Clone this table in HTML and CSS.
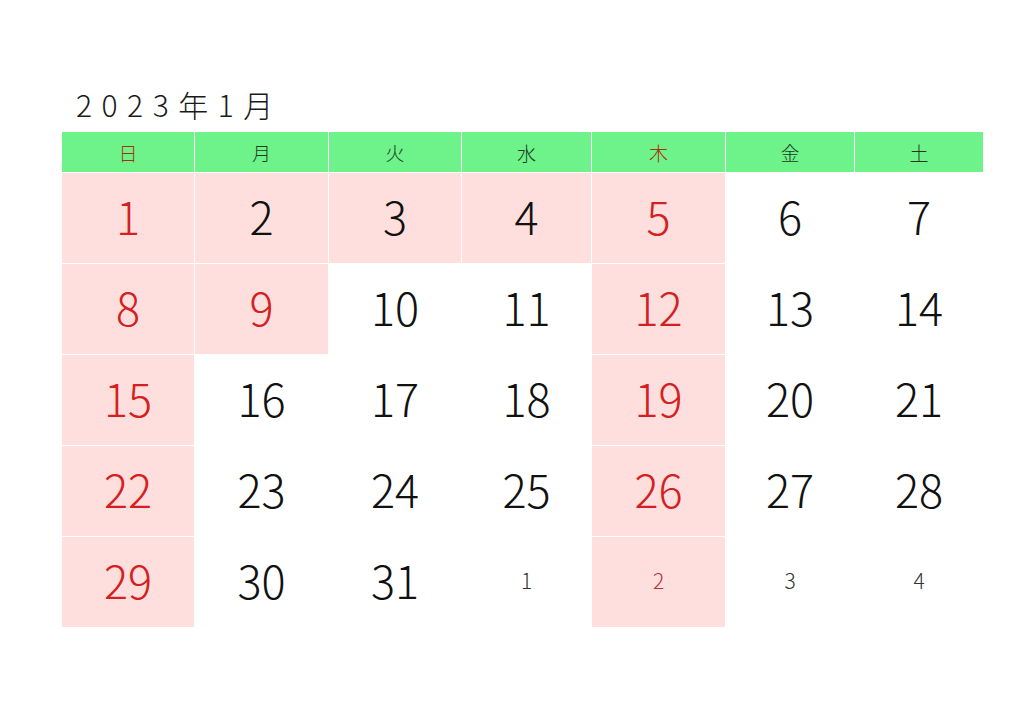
FILE: index.html
```html
<!DOCTYPE html>
<html lang="ja">
<head>
<meta charset="utf-8">
<title>2023年1月</title>
<link rel="stylesheet" href="styles.css">
</head>
<body>
<div class="page">
  <div class="title">2023年1月</div>
  <div class="cal">
    <div class="hd red">日</div>
    <div class="hd">月</div>
    <div class="hd">火</div>
    <div class="hd">水</div>
    <div class="hd red">木</div>
    <div class="hd">金</div>
    <div class="hd">土</div>

    <div class="d pink red">1</div>
    <div class="d pink">2</div>
    <div class="d pink">3</div>
    <div class="d pink">4</div>
    <div class="d pink red">5</div>
    <div class="d">6</div>
    <div class="d">7</div>

    <div class="d pink red">8</div>
    <div class="d pink red">9</div>
    <div class="d">10</div>
    <div class="d">11</div>
    <div class="d pink red">12</div>
    <div class="d">13</div>
    <div class="d">14</div>

    <div class="d pink red">15</div>
    <div class="d">16</div>
    <div class="d">17</div>
    <div class="d">18</div>
    <div class="d pink red">19</div>
    <div class="d">20</div>
    <div class="d">21</div>

    <div class="d pink red">22</div>
    <div class="d">23</div>
    <div class="d">24</div>
    <div class="d">25</div>
    <div class="d pink red">26</div>
    <div class="d">27</div>
    <div class="d">28</div>

    <div class="d pink red">29</div>
    <div class="d">30</div>
    <div class="d">31</div>
    <div class="d next">1</div>
    <div class="d next pink red">2</div>
    <div class="d next">3</div>
    <div class="d next">4</div>
  </div>
</div>
</body>
</html>
```

FILE: styles.css
```css
html, body {
  margin: 0;
  padding: 0;
  background: #ffffff;
}

body {
  font-family: "Noto Sans CJK JP", "Noto Sans", sans-serif;
  color: #1a1a1a;
}

.page {
  width: 1024px;
  height: 724px;
  padding: 84px 0 0 62px;
  box-sizing: border-box;
}

.title {
  height: 40px;
  line-height: 40px;
  padding-left: 14px;
  margin-bottom: 8px;
  font-size: 30px;
  letter-spacing: 9.5px;
  font-weight: 300;
}

.cal {
  display: grid;
  grid-template-columns: 132px 133px 132px 129px 133px 128px 128px;
  grid-template-rows: 40px repeat(5, 90px);
  column-gap: 1px;
  row-gap: 1px;
  background: #ffffff;
  width: 921px;
}

.hd {
  background: #6ef28a;
  font-size: 19px;
  font-weight: 300;
  display: flex;
  align-items: center;
  justify-content: center;
  color: #1d3a20;
}

.hd.red {
  color: #a8300e;
}

.d {
  display: flex;
  align-items: center;
  justify-content: center;
  padding-bottom: 6px;
  font-size: 45px;
  font-weight: 300;
  color: #111111;
  background: #ffffff;
}

.d.pink {
  background: #ffdfde;
}

.d.red {
  color: #d42020;
}

.d.next {
  font-size: 21px;
  padding-bottom: 4px;
  color: #333333;
}

.d.next.red {
  color: #b83030;
}
```
